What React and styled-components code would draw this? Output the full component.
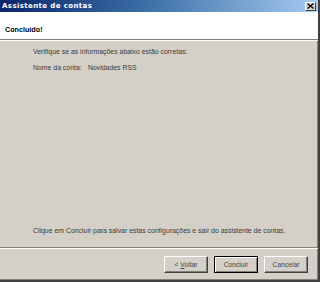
import styled, { createGlobalStyle } from "styled-components";

const Global = createGlobalStyle`
  html, body {
    margin: 0;
    padding: 0;
    background: #d4d0c8;
  }
  body {
    font-family: "Liberation Sans", Arial, sans-serif;
  }
`

const App = () => {
    return (
        <>
            <Global />
            <Window>
                <TitleBar>
                    <Title>Assistente de contas</Title>
                    <CloseButton>
                        <svg width="7" height="6" viewBox="0 0 7 6">
                            <path d="M0.5 0.5 L6.5 5.5 M6.5 0.5 L0.5 5.5" stroke="#000" strokeWidth="1.3" />
                        </svg>
                    </CloseButton>
                </TitleBar>
                <Header>
                    <HeaderTitle>Concluído!</HeaderTitle>
                </Header>
                <Body>
                    <Content>
                        <Line>Verifique se as informações abaixo estão corretas:</Line>
                        <Row>
                            <Label>Nome da conta:</Label>
                            <span>Novidades RSS</span>
                        </Row>
                    </Content>
                    <Line>Clique em Concluir para salvar estas configurações e sair do assistente de contas.</Line>
                </Body>
                <Footer>
                    <Button><span>&lt; <u>V</u>oltar</span></Button>
                    <Button $primary>Concluir</Button>
                    <Button>Cancelar</Button>
                </Footer>
            </Window>
        </>
    )
}

const Window = styled.div`
  width: 320px;
  height: 282px;
  box-sizing: border-box;
  display: flex;
  flex-direction: column;
  background: #d4d0c8;
  border-right: 2px solid #404040;
  border-bottom: 2px solid #404040;
  box-shadow: inset -1px -1px 0 #808080;
  overflow: hidden;
`

const TitleBar = styled.div`
  height: 12px;
  display: flex;
  align-items: center;
  justify-content: space-between;
  padding: 0 2px 0 2px;
  background: linear-gradient(to right, #0a246a 0%, #3a6ea5 45%, #a6caf0 100%);
`

const Title = styled.span`
  color: #fff;
  font-family: "DejaVu Sans", Verdana, sans-serif;
  font-weight: bold;
  font-size: 7px;
  line-height: 12px;
  letter-spacing: 0.4px;
`

const CloseButton = styled.div`
  width: 11px;
  height: 9px;
  box-sizing: border-box;
  display: flex;
  align-items: center;
  justify-content: center;
  background: #d4d0c8;
  border: 1px solid;
  border-color: #fff #404040 #404040 #fff;
`

const Header = styled.div`
  height: 28px;
  box-sizing: border-box;
  background: #fff;
  border-bottom: 1px solid #808080;
  box-shadow: 0 1px 0 #fff;
  padding: 6px 5px 0;
`

const HeaderTitle = styled.span`
  font-weight: bold;
  font-size: 7.2px;
  color: #000;
`

const Body = styled.div`
  flex: 1;
  display: flex;
  flex-direction: column;
  justify-content: space-between;
  padding: 8px 33px 12px;
  border-bottom: 1px solid #808080;
  box-shadow: 0 1px 0 #fff;
`

const Content = styled.div`
  display: flex;
  flex-direction: column;
  gap: 8px;
`

const Line = styled.div`
  font-size: 6.9px;
  line-height: 8px;
  color: #3a3a3a;
  white-space: nowrap;
`

const Row = styled(Line)`
  display: flex;
`

const Label = styled.span`
  width: 55px;
`

const Footer = styled.div`
  height: 32px;
  display: flex;
  justify-content: flex-end;
  align-items: flex-start;
  gap: 6px;
  padding: 8px 10px 0 0;
  box-sizing: border-box;
`

const Button = styled.div`
  width: 44px;
  height: 17px;
  box-sizing: border-box;
  display: flex;
  align-items: center;
  justify-content: center;
  font-size: 6.7px;
  color: #444;
  background: #d4d0c8;
  border: 1px solid;
  border-color: ${p => p.$primary ? "#000" : "#fff #404040 #404040 #fff"};
  box-shadow: ${p => p.$primary
    ? "inset 1px 1px 0 #fff, inset -1px -1px 0 #808080"
    : "inset -1px -1px 0 #808080"};
`

export default App
